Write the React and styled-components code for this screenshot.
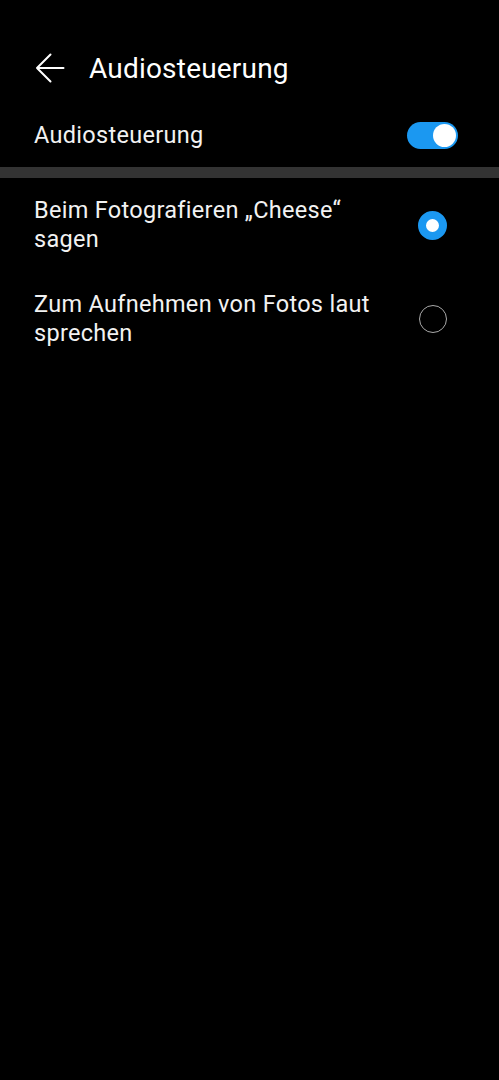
import React, { useState } from "react";
import styled, { createGlobalStyle } from "styled-components";

const GlobalStyle = createGlobalStyle`
  html, body {
    margin: 0;
    padding: 0;
    background: #000;
  }
  body {
    font-family: Roboto, "Noto Sans", "Liberation Sans", sans-serif;
    color: #fff;
  }
`;

const Screen = styled.div`
  width: 499px;
  min-height: 1080px;
  background: #000;
`;

const Header = styled.div`
  display: flex;
  align-items: center;
  gap: 24px;
  height: 56px;
  padding: 40px 0 0 35px;
`;

const BackButton = styled.button`
  display: flex;
  padding: 0;
  border: 0;
  background: none;
  cursor: pointer;
`;

const Title = styled.h1`
  margin: 0;
  font-size: 28px;
  font-weight: 400;
  letter-spacing: 0.2px;
  color: #fff;
`;

const SwitchRow = styled.div`
  display: flex;
  align-items: center;
  justify-content: space-between;
  height: 64px;
  padding: 7px 41px 0 34px;
`;

const Label = styled.span`
  font-size: 23.5px;
  line-height: 29px;
  letter-spacing: 0.3px;
  color: #f2f2f2;
`;

const Toggle = styled.button`
  position: relative;
  width: 51px;
  height: 27px;
  padding: 0;
  border: 0;
  border-radius: 14px;
  background: ${(p) => (p.$on ? "#1b98f1" : "#555")};
  cursor: pointer;

  &::after {
    content: "";
    position: absolute;
    top: 2px;
    left: ${(p) => (p.$on ? "26px" : "2px")};
    width: 23px;
    height: 23px;
    border-radius: 50%;
    background: #fff;
  }
`;

const Divider = styled.div`
  height: 11px;
  background: #333333;
`;

const OptionList = styled.div`
  display: flex;
  flex-direction: column;
  padding-top: 0;
`;

const OptionRow = styled.label`
  display: flex;
  align-items: center;
  justify-content: space-between;
  gap: 20px;
  min-height: 94px;
  padding: 0 52px 0 34px;
  box-sizing: border-box;
  cursor: pointer;
`;

const OptionText = styled(Label)`
  max-width: 350px;
`;

const Radio = styled.span`
  flex: none;
  box-sizing: border-box;
  width: ${(p) => (p.$checked ? "29px" : "28px")};
  height: ${(p) => (p.$checked ? "29px" : "28px")};
  border-radius: 50%;
  border: ${(p) => (p.$checked ? "8px solid #1b98f1" : "1.5px solid #a9a9a9")};
  background: ${(p) => (p.$checked ? "#fff" : "transparent")};
`;

const options = [
  { id: 1, text: "Beim Fotografieren „Cheese“ sagen" },
  { id: 2, text: "Zum Aufnehmen von Fotos laut sprechen" },
];

const App = () => {
  const [on, setOn] = useState(true);
  const [selected, setSelected] = useState(1);

  return (
    <Screen>
      <GlobalStyle />
      <Header>
        <BackButton aria-label="Zurück">
          <svg width="30" height="30" viewBox="0 0 30 30" fill="none">
            <path
              d="M28.5 15H2M15.5 1.5L2 15l13.5 13.5"
              stroke="#fff"
              strokeWidth="2"
              strokeLinecap="round"
              strokeLinejoin="round"
            />
          </svg>
        </BackButton>
        <Title>Audiosteuerung</Title>
      </Header>
      <SwitchRow>
        <Label>Audiosteuerung</Label>
        <Toggle $on={on} onClick={() => setOn(!on)} aria-label="Audiosteuerung" />
      </SwitchRow>
      <Divider />
      <OptionList>
        {options.map((o) => (
          <OptionRow key={o.id} onClick={() => setSelected(o.id)}>
            <OptionText>{o.text}</OptionText>
            <Radio $checked={selected === o.id} />
          </OptionRow>
        ))}
      </OptionList>
    </Screen>
  );
};

export default App;
